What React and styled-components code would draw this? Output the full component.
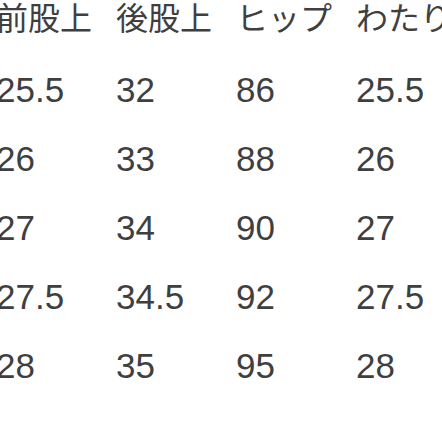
import React from "react";
import styled, { createGlobalStyle } from "styled-components";

const GlobalStyle = createGlobalStyle`
  html, body {
    margin: 0;
    padding: 0;
    background: #ffffff;
    overflow: hidden;
  }
`;

const Table = styled("div")`
  display: grid;
  grid-template-columns: repeat(4, 120px);
  margin-left: -4px;
  color: #3f3f3f;
  font-family: "Liberation Sans", "Noto Sans CJK JP", sans-serif;
  white-space: nowrap;
`;

const HeadCell = styled("div")`
  font-size: 32px;
  height: 38px;
  line-height: 38px;
  margin-bottom: 17px;
`;

const Cell = styled("div")`
  font-size: 35px;
  height: 69px;
  line-height: 69px;
`;

const headers = ["前股上", "後股上", "ヒップ", "わたり"];
const rows = [
  ["25.5", "32", "86", "25.5"],
  ["26", "33", "88", "26"],
  ["27", "34", "90", "27"],
  ["27.5", "34.5", "92", "27.5"],
  ["28", "35", "95", "28"],
];

export default function App() {
  return (
    <>
      <GlobalStyle />
      <Table>
        {headers.map((h) => (
          <HeadCell key={h}>{h}</HeadCell>
        ))}
        {rows.map((r, i) =>
          r.map((v, j) => <Cell key={`${i}-${j}`}>{v}</Cell>)
        )}
      </Table>
    </>
  );
}
